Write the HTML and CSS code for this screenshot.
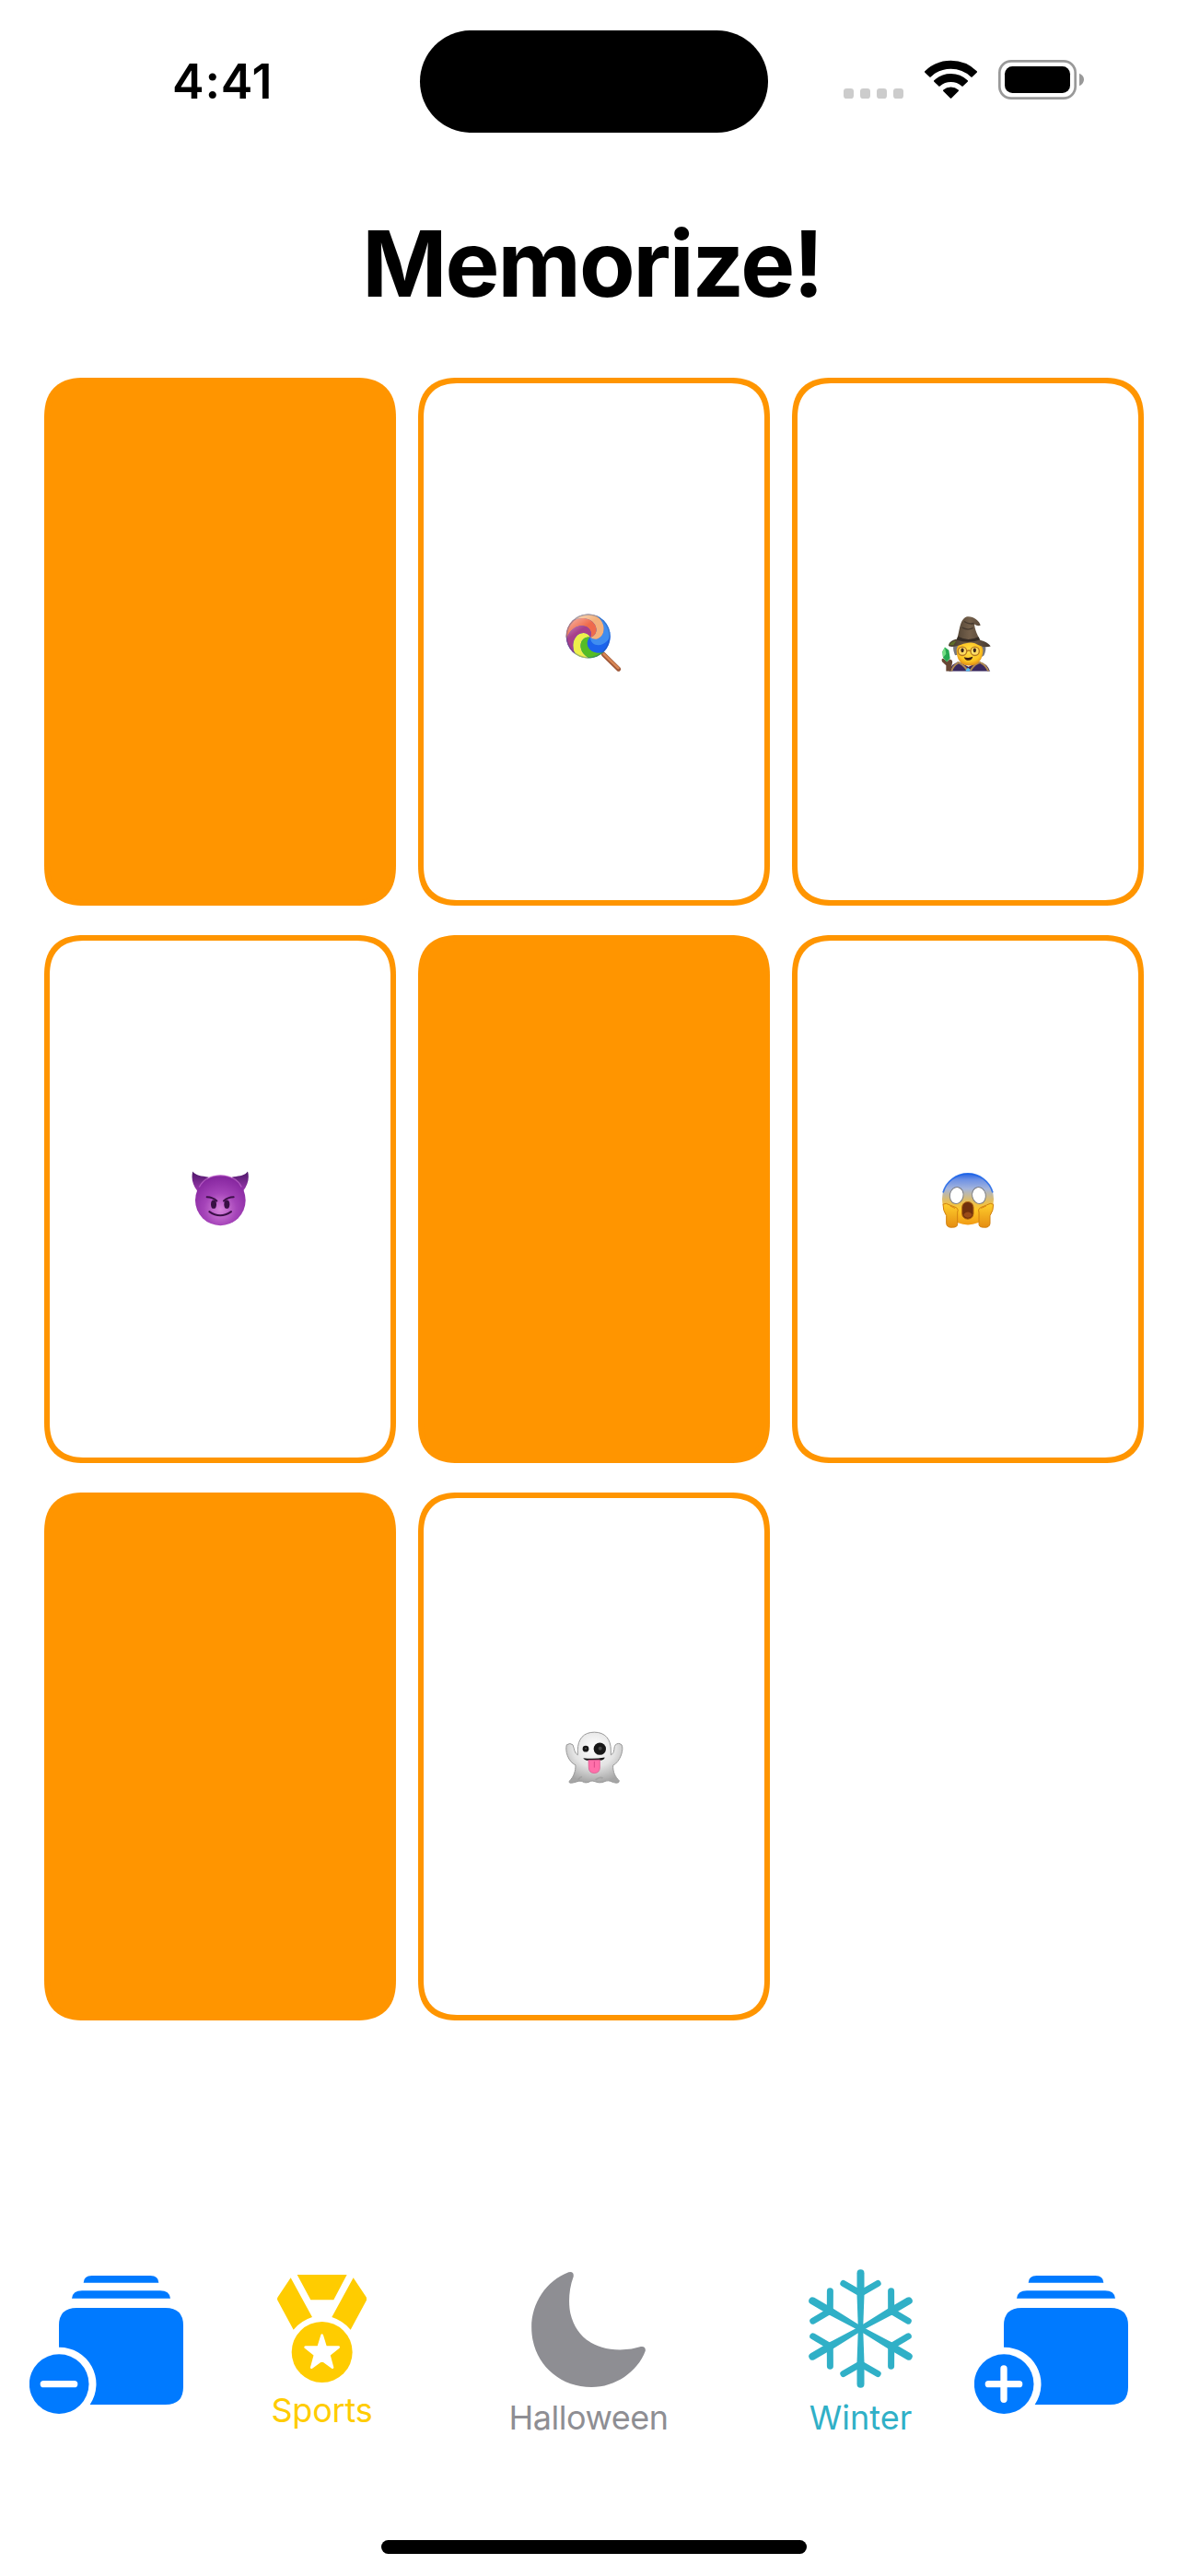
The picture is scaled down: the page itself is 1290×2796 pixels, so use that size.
FILE: index.html
```html
<!DOCTYPE html>
<html lang="en">
<head>
<meta charset="utf-8">
<title>Memorize!</title>
<link rel="stylesheet" href="styles.css">
</head>
<body>
<div class="screen">
  <header class="status">
    <span class="time">4:41</span>
    <div class="island"></div>
    <svg class="indicators" viewBox="0 0 900 240">
      <g fill="#ccc">
        <rect x="78" y="138" width="33" height="33" rx="10"/>
        <rect x="132" y="138" width="33" height="33" rx="10"/>
        <rect x="186" y="138" width="33" height="33" rx="10"/>
        <rect x="240" y="138" width="33" height="33" rx="10"/>
      </g>
      <g stroke="#000" stroke-width="6" stroke-linejoin="round">
        <path d="M345 84A118 118 0 0 1 510 84L495 98A98 98 0 0 0 360 98Z"/>
        <path d="M375 114A76 76 0 0 1 480 114L465 128A58 58 0 0 0 390 128Z"/>
        <path d="M405 145A34 34 0 0 1 450 145L427.500 167Z"/>
      </g>
      <rect x="586" y="49" width="247" height="121" rx="38" fill="none" stroke="#999" stroke-width="8"/>
      <rect x="603" y="66" width="213" height="87" rx="25"/>
      <path d="M846 89Q861 95 861 109T846 130Z" fill="#999"/>
    </svg>
  </header>

  <h1 class="title">Memorize!</h1>

  <main class="cards">
    <div class="card down"></div>

    <div class="card">
      <svg class="emoji" viewBox="0 4.500 270 270" role="img" aria-label="lollipop">
        <defs>
          <clipPath id="candy"><circle cx="116" cy="120" r="72"/></clipPath>
          <linearGradient id="candyShade" x1="0" y1="0" x2=".7" y2="1">
            <stop offset="0" stop-color="#fff" stop-opacity=".65"/>
            <stop offset=".4" stop-color="#fff" stop-opacity="0"/>
          </linearGradient>
          <path id="blade" d="M0 0C10-22 45-20 55 15C62 45 40 85 0 95L50 100L74.300 59.200C91.400 21.700 73.800-20.500 46-33.700C12.400-47.700-11-21.500 0 0Z"/>
        </defs>
        <path d="M166 179L215 227" stroke="#9d5637" stroke-width="15" stroke-linecap="round"/>
        <path d="M167 178L214 224" stroke="#d88755" stroke-width="8" stroke-linecap="round"/>
        <g clip-path="url(#candy)">
          <rect x="40" y="40" width="160" height="160" fill="#1e62e8"/>
          <g transform="translate(123 124) scale(-1 1) rotate(51.430)">
            <use href="#blade" fill="#eef04b"/>
            <use href="#blade" fill="#55bd25" transform="rotate(-308.580)"/>
            <use href="#blade" fill="#1c63ec" transform="rotate(-257.150)"/>
            <use href="#blade" fill="#3f8df0" transform="rotate(-205.720)"/>
            <use href="#blade" fill="#f4b27c" transform="rotate(-154.290)"/>
            <use href="#blade" fill="#ef6b4c" transform="rotate(-102.860)"/>
            <use href="#blade" fill="#a8408b" transform="rotate(-51.430)"/>
          </g>
          <circle cx="116" cy="120" r="72" fill="url(#candyShade)"/>
          <circle cx="116" cy="120" r="70" fill="none" stroke="#24518e" stroke-opacity=".35" stroke-width="4"/>
        </g>
      </svg>
    </div>

    <div class="card">
      <svg class="emoji" viewBox="3 4.500 270 270" role="img" aria-label="mage">
        <defs>
          <clipPath id="bust"><rect x="40" y="40" width="190" height="194"/></clipPath>
          <radialGradient id="skin" cx=".5" cy=".4" r=".6">
            <stop offset="0" stop-color="#ffe14a"/><stop offset=".7" stop-color="#fdc521"/><stop offset="1" stop-color="#dd8a16"/>
          </radialGradient>
          <linearGradient id="hat"><stop offset="0" stop-color="#3f3529"/><stop offset=".5" stop-color="#74604b"/><stop offset="1" stop-color="#44372d"/></linearGradient>
        </defs>
        <g clip-path="url(#bust)">
          <path d="M75 240Q82 207 111 205L140 220L172 204Q203 207 212 240Z" fill="#39285e"/>
          <path d="M103 205Q120 209 137 232M180 205Q162 208 146 232M84 235Q90 215 105 208M205 235Q197 214 180 207" fill="none" stroke="#ad8953" stroke-width="6"/>
          <path d="M96 182Q81 145 105 138H180Q206 150 190 183Q177 195 166 180H110Z" fill="#77777c"/>
          <path d="M101 165Q104 138 144 138T187 165C187 194 173 216 143 216S101 194 101 165Z" fill="url(#skin)"/>
          <g fill="#fff2bc" fill-opacity=".35" stroke="#b57820" stroke-width="4">
            <circle cx="120" cy="169" r="14"/><circle cx="161" cy="169" r="14"/><path d="M134 169Q141 164 147 169"/>
          </g>
          <ellipse cx="120" cy="166" rx="5" ry="7" fill="#3b251b"/><ellipse cx="160" cy="166" rx="5" ry="7" fill="#3b251b"/>
          <path d="M125 188Q140 193 154 187Q151 199 140 199T125 188Z" fill="#3b1d12"/>
          <path d="M75 150C77 137 94 130 102 130C111 111 109 67 133 57C151 52 176 68 179 85Q168 88 159 81C161 102 171 119 177 132C192 137 206 143 212 153C190 160 177 150 161 143C132 135 108 156 82 154Q76 154 75 150Z" fill="url(#hat)"/>
          <path d="M106 121Q137 139 173 122L177 132Q139 146 101 132Z" fill="#352c25"/>
          <path d="M126 72Q142 83 158 78M119 92Q138 103 155 93" fill="none" stroke="#463a2f" stroke-width="4"/>
          <path d="M76 149Q85 136 100 135L91 149Z" fill="#668126" opacity=".7"/>
          <path d="M67 236V215L54 203Q50 193 58 193L70 203L79 195Q90 198 87 207L82 236Z" fill="#674634"/>
          <path d="M63 156L76 166L80 192L69 204L57 190L55 170Z" fill="#26a850"/>
          <path d="M63 156L67 178L57 190L55 170Z" fill="#73dd83"/>
          <path d="M138 223L146 229L141 239H134L131 230Z" fill="#55bcf2"/>
        </g>
      </svg>
    </div>

    <div class="card">
      <svg class="emoji" viewBox="-3 4.500 270 270" role="img" aria-label="smiling face with horns">
        <defs>
          <radialGradient id="imp" cx=".5" cy=".68" r=".65">
            <stop offset="0" stop-color="#d886dc"/><stop offset=".5" stop-color="#a544b9"/><stop offset="1" stop-color="#86269f"/>
          </radialGradient>
          <linearGradient id="horn" x1="0" y1="0" x2="0" y2="1"><stop offset="0" stop-color="#4c1767"/><stop offset="1" stop-color="#9d38b0"/></linearGradient>
        </defs>
        <path d="M43 48C54 63 72 62 95 67L58 112C42 91 37 68 43 48ZM222 48C211 63 193 62 170 67L207 112C223 91 228 68 222 48Z" fill="url(#horn)"/>
        <circle cx="133" cy="142" r="82" fill="url(#imp)"/>
        <path d="M64 99Q83 61 133 61T202 99" fill="none" stroke="#c76bd2" stroke-width="4" opacity=".65"/>
        <ellipse cx="111" cy="155" rx="9" ry="14" fill="#381043"/><ellipse cx="154" cy="155" rx="9" ry="14" fill="#381043"/>
        <path d="M89 131Q108 131 121 144M176 131Q157 131 144 144M97 179Q132 204 168 179" fill="none" stroke="#3c1048" stroke-width="6" stroke-linecap="round"/>
      </svg>
    </div>

    <div class="card down"></div>

    <div class="card">
      <svg class="emoji" viewBox="3 4.500 270 270" role="img" aria-label="face screaming in fear">
        <defs>
          <linearGradient id="fear" x1="0" y1="0" x2="0" y2="1">
            <stop offset="0" stop-color="#2362e2"/><stop offset=".12" stop-color="#6d91e5"/><stop offset=".3" stop-color="#a3b4dc"/><stop offset=".55" stop-color="#e6be59"/><stop offset=".7" stop-color="#ffc928"/><stop offset="1" stop-color="#f19b15"/>
          </linearGradient>
          <linearGradient id="hand" x1="0" y1="0" x2="0" y2="1"><stop offset="0" stop-color="#ffcf2c"/><stop offset="1" stop-color="#e58d12"/></linearGradient>
        </defs>
        <circle cx="138" cy="138" r="84" fill="url(#fear)"/>
        <path d="M57 117A84 84 0 0 1 219 117" fill="none" stroke="#1761e8" stroke-width="5" opacity=".8"/>
        <ellipse cx="101" cy="126" rx="22" ry="27" transform="rotate(12 101 126)" fill="#fff" stroke="#7a7c83" stroke-width="3"/>
        <ellipse cx="174" cy="126" rx="22" ry="27" transform="rotate(-12 174 126)" fill="#fff" stroke="#7a7c83" stroke-width="3"/>
        <rect x="119" y="147" width="37" height="56" rx="18" fill="#70300d" stroke="#b06510" stroke-width="3"/>
        <path d="M125 187Q138 173 151 187V192Q138 206 125 192Z" fill="#9b4c18"/>
        <g fill="url(#hand)" stroke="#d28110" stroke-width="3">
          <path d="M57 155Q67 149 78 157L101 166Q109 172 104 182V218Q105 230 88 230Q69 232 68 217V192Q56 174 57 155Z"/>
          <path d="M221 155Q211 149 200 157L178 166Q169 172 174 182V218Q173 230 190 230Q209 232 210 217V192Q222 174 221 155Z"/>
        </g>
        <path d="M80 160L96 168M198 160L181 168" stroke="#d98614" stroke-width="3"/>
      </svg>
    </div>

    <div class="card down"></div>

    <div class="card">
      <svg class="emoji" viewBox="0 -10.500 270 270" role="img" aria-label="ghost">
        <defs>
          <radialGradient id="sheet" cx=".5" cy=".3" r=".7">
            <stop offset="0" stop-color="#fff"/><stop offset=".55" stop-color="#e3e3e3"/><stop offset="1" stop-color="#a5a5a5"/>
          </radialGradient>
        </defs>
        <path d="M82 103C82 66 101 44 136 44S190 66 190 103V118C204 111 198 96 204 86Q214 76 225 85C233 98 222 139 197 152C196 173 204 189 217 202Q217 210 208 209C195 208 191 203 182 202C170 201 167 209 152 208C141 207 134 201 125 203C114 209 105 210 98 205C88 199 75 208 62 209Q52 210 55 203C70 188 75 170 75 151C50 140 40 104 46 85Q57 77 66 85C72 100 71 112 82 118Z" fill="url(#sheet)" stroke="#999" stroke-width="3"/>
        <path d="M96 189Q88 190 84 198M140 199Q154 187 164 194" fill="none" stroke="#858585" stroke-width="5" opacity=".35"/>
        <circle cx="108" cy="98" r="10" fill="#171717"/><circle cx="154" cy="98" r="20" fill="#171717"/>
        <circle cx="155" cy="97" r="6" fill="#444"/><circle cx="108" cy="97" r="3" fill="#4a4a4a"/>
        <path d="M100 128Q135 132 170 126Q169 135 154 136H117Q103 135 100 128Z" fill="#171717"/>
        <path d="M117 135L154 134V160Q153 177 136 177T118 160Z" fill="#ff70aa" stroke="#d84986" stroke-width="2"/>
        <path d="M136 139V159" stroke="#d94987" stroke-width="3"/>
      </svg>
    </div>
  </main>

  <footer class="toolbar">
    <button class="deck-button" aria-label="Remove card">
      <svg viewBox="36 60 501 450">
        <path d="M212 83Q213 60 239 60H430Q456 60 457 83ZM174 134Q177 109 207 109H462Q492 109 495 134Z"/>
        <path d="M132 293V222Q132 165 190 165H479Q537 165 537 222V423Q537 480 479 480H233A120 120 0 0 0 132 293Z"/>
        <circle cx="132.500" cy="413" r="97"/>
        <rect x="71" y="402" width="122" height="22" rx="11" fill="#fff"/>
      </svg>
    </button>

    <button class="theme sports">
      <svg viewBox="843 57 291 351">
        <path d="M908 57H1070L1027 139H952ZM887 67L957 195Q920 207 896 236L845 142Q841 136 845 130ZM1091 67L1021 195Q1058 207 1082 236L1133 142Q1136 136 1133 130Z"/>
        <circle cx="989" cy="309" r="99"/>
        <path d="M989 254L1001 293H1043L1012 318L1023 359L989 334L955 359L966 318L935 293H977Z" fill="#fff" stroke="#fff" stroke-width="8" stroke-linejoin="round"/>
      </svg>
      <span>Sports</span>
    </button>

    <button class="theme halloween">
      <svg viewBox="141 47 372 376">
        <path d="M262 48Q280 44 278 62C261 106 262 157 268 182C286 258 345 301 430 301C458 301 479 297 498 291Q514 289 513 304C488 373 414 423 337 423C225 423 141 338 141 228C141 149 188 77 262 48Z"/>
      </svg>
      <span>Halloween</span>
    </button>

    <button class="theme winter">
      <svg viewBox="1042 39 339 387">
        <defs>
          <g id="arm">
            <path d="M-8 0L-12-110V-181A12 12 0 0 1 12-181V-110L8 0Z"/>
            <path d="M-56-147L0-115L56-147" fill="none" stroke="#30b0c7" stroke-width="21" stroke-linecap="round"/>
          </g>
        </defs>
        <g transform="translate(1211.500 232.500)">
          <circle r="15"/>
          <use href="#arm"/>
          <use href="#arm" transform="rotate(60)"/>
          <use href="#arm" transform="rotate(120)"/>
          <use href="#arm" transform="rotate(180)"/>
          <use href="#arm" transform="rotate(240)"/>
          <use href="#arm" transform="rotate(300)"/>
        </g>
      </svg>
      <span>Winter</span>
    </button>

    <button class="deck-button" aria-label="Add card">
      <svg viewBox="36 60 501 450">
        <path d="M212 83Q213 60 239 60H430Q456 60 457 83ZM174 134Q177 109 207 109H462Q492 109 495 134Z"/>
        <path d="M132 293V222Q132 165 190 165H479Q537 165 537 222V423Q537 480 479 480H233A120 120 0 0 0 132 293Z"/>
        <circle cx="132.500" cy="413" r="97"/>
        <path d="M82 413H182M132 363V463" stroke="#fff" stroke-width="22" stroke-linecap="round"/>
      </svg>
    </button>
  </footer>

  <div class="home"></div>
</div>
</body>
</html>
```
FILE: styles.css
```css
* { box-sizing: border-box; }

body {
  margin: 0;
  background: #fff;
  color: #000;
  font-family: Inter, "Liberation Sans", sans-serif;
}

.screen {
  width: 1290px;
  height: 2796px;
  display: flex;
  flex-direction: column;
  overflow: hidden;
}

.status {
  height: 177px;
  display: grid;
  grid-template-columns: 456px 378px 456px;
  align-items: start;
}

.time {
  padding: 57px 0 0 187px;
  font-size: 52px;
  line-height: 63px;
  font-weight: 600;
  letter-spacing: 0.8px;
}

.island {
  height: 111px;
  margin-top: 33px;
  border-radius: 56px;
  background: #000;
}

.indicators {
  width: 300px;
  height: 80px;
  margin: 50px 0 0 56px;
}

.title {
  height: 233px;
  margin: 0;
  padding: 49px 4px 0 0;
  font-size: 99px;
  line-height: 120px;
  font-weight: 700;
  letter-spacing: -2px;
  text-align: center;
}

.cards {
  height: 2053px;
  padding: 0 48px;
  display: grid;
  grid-template-columns: repeat(3, 382px);
  grid-auto-rows: 573px;
  align-content: start;
  gap: 32px 24px;
}

.card {
  display: flex;
  align-items: center;
  justify-content: center;
  border: 6px solid #ff9500;
  border-radius: 38px;
}

@supports (corner-shape: superellipse(1.3)) {
  .card {
    border-radius: 44px;
    corner-shape: superellipse(1.3);
  }
}

.card.down { background: #ff9500; }

.emoji {
  width: 90px;
  height: 90px;
}

.toolbar {
  height: 294px;
  padding-left: 32px;
  display: flex;
  align-items: flex-start;
}

button {
  padding: 0;
  border: 0;
  background: none;
  font: inherit;
}

svg {
  display: block;
  flex: none;
}

.deck-button {
  width: 167px;
  padding-top: 7px;
}

.deck-button svg {
  width: 167px;
  height: 150px;
  fill: #007aff;
}

.theme {
  display: flex;
  flex-direction: column;
  align-items: center;
  font-size: 36px;
  line-height: 44px;
}

.theme svg { fill: currentColor; }

.sports {
  width: 235px;
  margin-left: 33px;
  padding-top: 6px;
  gap: 8px;
  color: #fc0;
  letter-spacing: -0.2px;
}

.sports svg { width: 97px; height: 117px; }

.halloween {
  width: 344px;
  padding-top: 3px;
  gap: 11px;
  color: #8e8e93;
  letter-spacing: -0.5px;
}

.halloween svg { width: 124px; height: 125px; }

.winter {
  width: 247px;
  gap: 10px;
  color: #30b0c7;
}

.winter svg { width: 113px; height: 129px; }

.home {
  width: 462px;
  height: 15px;
  margin: 0 auto;
  border-radius: 8px;
  background: #000;
}
```
